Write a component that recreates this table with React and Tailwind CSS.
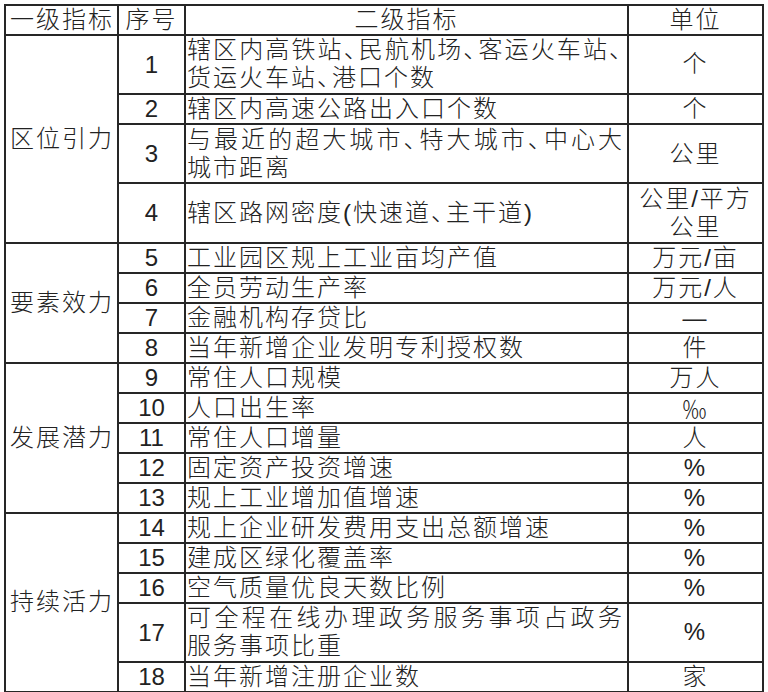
import React from "react";

const groups = [
  {
    name: "区位引力",
    rows: [
      { n: "1", lines: ["辖区内高铁站、民航机场、客运火车站、", "货运火车站、港口个数"], unit: ["个"], tall: true },
      { n: "2", lines: ["辖区内高速公路出入口个数"], unit: ["个"] },
      { n: "3", lines: ["与最近的超大城市、特大城市、中心大", "城市距离"], unit: ["公里"], tall: true },
      { n: "4", lines: ["辖区路网密度(快速道、主干道)"], unit: ["公里/平方", "公里"], tall: true },
    ],
  },
  {
    name: "要素效力",
    rows: [
      { n: "5", lines: ["工业园区规上工业亩均产值"], unit: ["万元/亩"] },
      { n: "6", lines: ["全员劳动生产率"], unit: ["万元/人"] },
      { n: "7", lines: ["金融机构存贷比"], unit: ["—"] },
      { n: "8", lines: ["当年新增企业发明专利授权数"], unit: ["件"] },
    ],
  },
  {
    name: "发展潜力",
    rows: [
      { n: "9", lines: ["常住人口规模"], unit: ["万人"] },
      { n: "10", lines: ["人口出生率"], unit: ["‰"] },
      { n: "11", lines: ["常住人口增量"], unit: ["人"] },
      { n: "12", lines: ["固定资产投资增速"], unit: ["%"] },
      { n: "13", lines: ["规上工业增加值增速"], unit: ["%"] },
    ],
  },
  {
    name: "持续活力",
    rows: [
      { n: "14", lines: ["规上企业研发费用支出总额增速"], unit: ["%"] },
      { n: "15", lines: ["建成区绿化覆盖率"], unit: ["%"] },
      { n: "16", lines: ["空气质量优良天数比例"], unit: ["%"] },
      { n: "17", lines: ["可全程在线办理政务服务事项占政务", "服务事项比重"], unit: ["%"], tall: true },
      { n: "18", lines: ["当年新增注册企业数"], unit: ["家"] },
    ],
  },
];

// 顿号在原图里是压缩过的半宽
function withCommas(s) {
  const parts = s.split("、");
  return parts.map((p, i) => (
    <React.Fragment key={i}>
      {p}
      {i < parts.length - 1 && <span className="tracking-[-9px]">、</span>}
    </React.Fragment>
  ));
}

const cell = "border-r-2 border-b-2 border-[#262626] p-0 align-middle";

export default function App() {
  return (
    <div className="bg-white w-[768px] h-[692px] pt-[4px] pl-[4px] text-[#222] font-light font-['Liberation_Sans','Noto_Sans_CJK_SC',sans-serif] text-[24px] tracking-[2px]">
      <table className="table-fixed w-[760px] border-separate border-spacing-0 border-t-2 border-l-2 border-[#262626]">
        <colgroup>
          <col className="w-[113px]" />
          <col className="w-[67px]" />
          <col className="w-[443px]" />
          <col className="w-[135px]" />
        </colgroup>
        <thead>
          <tr className="h-[29.65px]">
            <th className={`${cell} font-light text-left pl-[4px] leading-[27px]`}>一级指标</th>
            <th className={`${cell} font-light text-center leading-[27px]`}>序号</th>
            <th className={`${cell} font-light text-center leading-[27px]`}>二级指标</th>
            <th className={`${cell} font-light text-center leading-[27px]`}>单位</th>
          </tr>
        </thead>
        <tbody>
          {groups.map((g) =>
            g.rows.map((r, i) => (
              <tr key={r.n} className={r.tall ? "h-[59.3px]" : "h-[29.65px]"}>
                {i === 0 && (
                  <td rowSpan={g.rows.length} className={`${cell} text-left pl-[4px]`}>
                    {g.name}
                  </td>
                )}
                <td className={`${cell} text-center leading-[27px] tracking-normal font-normal`}>{r.n}</td>
                <td className={`${cell} pl-[1px] pr-[3px] leading-[28px]`}>
                  {r.lines.map((l, j) => (
                    <div
                      key={j}
                      className={
                        j < r.lines.length - 1
                          ? "whitespace-nowrap text-justify [text-align-last:justify]"
                          : "whitespace-nowrap"
                      }
                    >
                      {withCommas(l)}
                    </div>
                  ))}
                </td>
                <td className={`${cell} text-center leading-[28px]`}>
                  {r.unit.map((u, j) => (
                    <div key={j} className={u === "‰" ? "font-['Noto_Sans_CJK_SC',sans-serif]" : ""}>
                      {u}
                    </div>
                  ))}
                </td>
              </tr>
            ))
          )}
        </tbody>
      </table>
    </div>
  );
}
